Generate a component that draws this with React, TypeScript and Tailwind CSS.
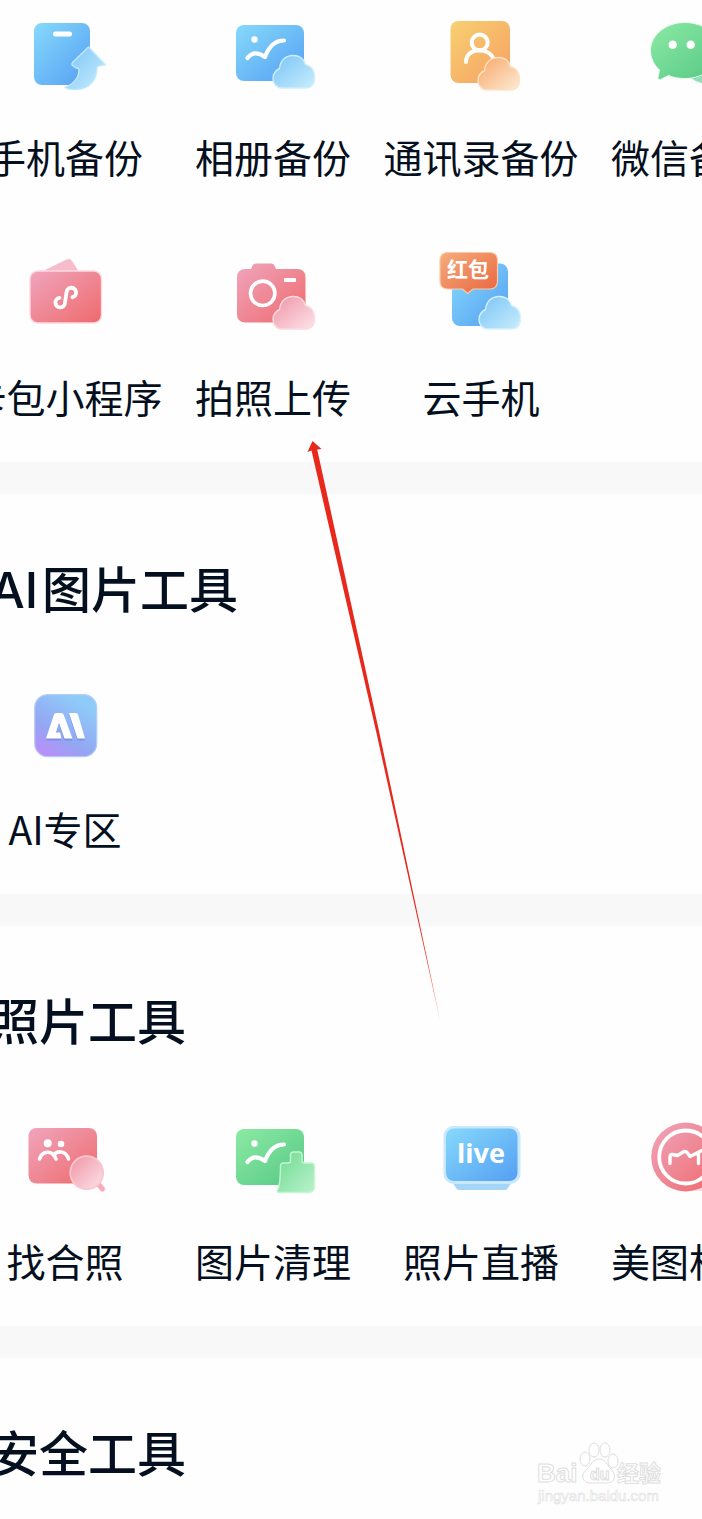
import type { ReactNode } from "react";

type Tool = { name: string; icon: ReactNode };
type Tone = { id: string; from: string; to: string };

const tones: Tone[] = [
  { id: "blue", from: "#86d9fb", to: "#549ff3" },
  { id: "orange", from: "#f7d071", to: "#f7a063" },
  { id: "green", from: "#8ceaa4", to: "#55c885" },
  { id: "pink", from: "#f0a5bd", to: "#ee6a6c" },
  { id: "badge", from: "#f6ad7c", to: "#e96540" },
  { id: "blue-glass", from: "#79c4f6", to: "#c9edfd" },
  { id: "orange-glass", from: "#f8a666", to: "#fdebd6" },
  { id: "green-glass", from: "#6fd991", to: "#b9f3cb" },
  { id: "pink-glass", from: "#f093a4", to: "#fce4ea" },
];

function Gradients() {
  return (
    <svg aria-hidden="true" className="absolute size-0">
      <defs>
        {tones.map((tone) => (
          <linearGradient key={tone.id} id={tone.id} x1="0" y1="0" x2="1" y2="1">
            <stop offset="0" stopColor={tone.from} />
            <stop offset="1" stopColor={tone.to} />
          </linearGradient>
        ))}
        <linearGradient id="ai" x1="0.15" y1="1" x2="0.7" y2="0.1">
          <stop offset="0" stopColor="#bd8cfa" />
          <stop offset="0.4" stopColor="#94a6f3" />
          <stop offset="1" stopColor="#8fcbf9" />
        </linearGradient>
      </defs>
    </svg>
  );
}

function Icon({ children }: { children: ReactNode }) {
  return (
    <svg
      viewBox="0 0 120 90"
      fill="none"
      aria-hidden="true"
      className="h-[90px] w-[120px] shrink-0"
    >
      {children}
    </svg>
  );
}

function Cloud({ fill, edge, at }: { fill: string; edge: string; at?: string }) {
  return (
    <path
      transform={at}
      d="M69 78C63 78 60 73 60 68.500C60 63.500 62.500 60.500 66.500 58.500C67.500 50 73 45.500 80 45.500C86.500 45.500 91 49 92.500 54.500C98.500 56 101.500 61 101.500 67C101.500 74 98 78 92 78Z"
      fill={fill}
      stroke={edge}
      strokeWidth="1.4"
    />
  );
}

function Landscape() {
  return (
    <>
      <circle cx="41.500" cy="29.500" r="3.200" fill="#fff" />
      <path
        d="M34.500 48C38.500 42.500 44 41.500 52 47C56 36 62 30.500 71 30.500"
        stroke="#fff"
        strokeWidth="4.200"
        strokeLinecap="round"
        strokeLinejoin="round"
      />
    </>
  );
}

function PhoneBackupIcon() {
  return (
    <Icon>
      <rect x="29" y="13" width="56" height="62" rx="8" fill="url(#blue)" />
      <rect x="48" y="21.500" width="19" height="5" rx="2.500" fill="#fff" />
      <path
        d="M83.500 37L100.500 55Q96 54.500 92 57C92 69 85 79 72 79.500Q64 80 60 77.500C69 74 74.500 67 74 59Q70 58 67 55Q66.500 53.500 68 52Z"
        fill="url(#blue-glass)"
        stroke="#bfe8fc"
        strokeWidth="1.4"
        strokeLinejoin="round"
      />
    </Icon>
  );
}

function AlbumIcon() {
  return (
    <Icon>
      <rect x="23" y="15" width="68" height="56" rx="8" fill="url(#blue)" />
      <Landscape />
      <Cloud fill="url(#blue-glass)" edge="#cdeefd" />
    </Icon>
  );
}

function ContactsIcon() {
  return (
    <Icon>
      <rect x="29.500" y="11" width="59.500" height="62" rx="8" fill="url(#orange)" />
      <g stroke="#fff" strokeWidth="4" strokeLinecap="round">
        <circle cx="58.700" cy="32.500" r="8" />
        <path d="M45 52C45 36.500 69.500 36.500 73 50.500" />
      </g>
      <Cloud fill="url(#orange-glass)" edge="#fde3c4" at="translate(-3 2)" />
    </Icon>
  );
}

function WechatIcon() {
  return (
    <Icon>
      <ellipse cx="81" cy="55" rx="26" ry="19" fill="#8fdfb4" />
      <path
        d="M56 12.500C75 12.500 91 25 91 40.500C91 56 75 68.500 56 68.500C50 68.500 44 67.500 39.500 65.500L31.500 69.500Q28.500 70.500 29 67.500L30.500 60C25 55 21.500 48 21.500 40.500C21.500 25 37 12.500 56 12.500Z"
        fill="url(#green)"
        stroke="#e6faec"
        strokeWidth="1"
      />
      <circle cx="43.700" cy="34.700" r="4.200" fill="#fff" />
      <circle cx="61.700" cy="34.700" r="4.200" fill="#fff" />
    </Icon>
  );
}

function CardIcon() {
  return (
    <Icon>
      <path d="M36 22L61.500 9.500Q65 8 67 11L74 22Z" fill="#f6bccb" />
      <rect
        x="25"
        y="21"
        width="71.500"
        height="52"
        rx="8"
        fill="url(#pink)"
        stroke="#fbd9e0"
        strokeWidth="1.4"
      />
      <path
        d="M67.500 47.200A4.800 4.800 0 1 0 61.500 42.500L60 52.500A4.800 4.800 0 1 1 54.500 47.800"
        stroke="#fff"
        strokeWidth="3.800"
        strokeLinecap="round"
      />
    </Icon>
  );
}

function CameraIcon() {
  return (
    <Icon>
      <path
        d="M32.500 19H38L39.500 15.500Q40.500 13.500 43 13.500H58Q60.500 13.500 61.500 15.500L63 19H84Q92.500 19 92.500 27.500V64Q92.500 72.500 84 72.500H32.500Q24 72.500 24 64V27.500Q24 19 32.500 19Z"
        fill="url(#pink)"
      />
      <circle cx="49.700" cy="43.300" r="12.200" stroke="#fff" strokeWidth="3.600" />
      <rect x="71" y="28" width="12" height="4" rx="1" fill="#fff" />
      <Cloud fill="url(#pink-glass)" edge="#fbd9e0" at="translate(0 1)" />
    </Icon>
  );
}

function CloudPhoneIcon() {
  return (
    <Icon>
      <rect x="31" y="13.500" width="56" height="62.500" rx="8" fill="url(#blue)" />
      <path
        d="M27 2.500H68.500Q76.500 2.500 76.500 10.500V31Q76.500 39 68.500 39H52L46.700 43.500L41.500 39H27Q19 39 19 31V10.500Q19 2.500 27 2.500Z"
        fill="url(#badge)"
        stroke="#fbc9a8"
        strokeWidth="1.2"
      />
      <text
        x="47"
        y="27"
        textAnchor="middle"
        fill="#fff"
        className="font-['Noto_Sans_CJK_SC',sans-serif] text-[21px] font-bold"
      >
        红包
      </text>
      <Cloud fill="url(#blue-glass)" edge="#d6f1fd" at="translate(-2 1)" />
    </Icon>
  );
}

function AiIcon() {
  return (
    <Icon>
      <rect
        x="29.700"
        y="12.700"
        width="62"
        height="62"
        rx="13"
        fill="url(#ai)"
        stroke="#b3cdf8"
        strokeWidth="1.2"
      />
      <g fill="#5d78cf" opacity="0.45" transform="translate(0 2)">
        <path d="M41 56.500L49 32.500Q49.500 31 51.500 31H56Q58 31 58.600 32.500L67.500 56.500H59.500L54 41L51 50.500H55L56.500 56.500Z" />
        <path d="M64 31H71Q72.300 31 73 32.500L80 56.500H72.500Z" />
      </g>
      <g fill="#fff">
        <path d="M41 56.500L49 32.500Q49.500 31 51.500 31H56Q58 31 58.600 32.500L67.500 56.500H59.500L54 41L51 50.500H55L56.500 56.500Z" />
        <path d="M64 31H71Q72.300 31 73 32.500L80 56.500H72.500Z" />
      </g>
    </Icon>
  );
}

function FindPhotosIcon() {
  return (
    <Icon>
      <rect x="23.500" y="14" width="68.500" height="55.500" rx="8" fill="url(#pink)" />
      <circle cx="42.700" cy="29.300" r="4" fill="#fff" />
      <circle cx="56" cy="30" r="3.300" fill="#fff" />
      <path
        d="M34.500 45C37 36.500 47.500 35.500 51 45M48.500 41C53 35.500 61.500 37.500 63.500 45"
        stroke="#fff"
        strokeWidth="3.600"
        strokeLinecap="round"
      />
      <path d="M94 71L97.500 75" stroke="#f5adba" strokeWidth="5" strokeLinecap="round" />
      <circle
        cx="81.700"
        cy="58.700"
        r="16.500"
        fill="url(#pink-glass)"
        stroke="#fac6d0"
        strokeWidth="1.800"
      />
    </Icon>
  );
}

function CleanIcon() {
  return (
    <Icon>
      <rect x="23" y="15" width="68" height="56" rx="8" fill="url(#green)" />
      <Landscape />
      <path
        d="M65.500 78.500Q63.500 78.500 64.500 76.500Q67.500 70 67.500 52Q67.500 49 70.500 49H75Q77.500 49 77.500 46.500V41Q77.500 38 80.500 38H86Q89 38 89 41V46.500Q89 49 91.500 49H98Q101.500 49 101.500 52.500V72Q101.500 78.500 95 78.500Z"
        fill="url(#green-glass)"
        stroke="#c4f6d2"
        strokeWidth="1.4"
      />
    </Icon>
  );
}

function LiveIcon() {
  return (
    <Icon>
      <path d="M31 68H91L86.500 74.500Q85.500 76 83.500 76H38.500Q36.500 76 35.500 74.500Z" fill="#a5d6f8" />
      <rect x="22.500" y="12" width="77" height="58" rx="10" fill="#c8e8fc" />
      <rect x="25" y="14.500" width="71.500" height="52.500" rx="8" fill="url(#blue)" />
      <text
        x="60"
        y="49"
        textAnchor="middle"
        fill="#fff"
        className="font-['Open_Sans',sans-serif] text-[27px] font-bold"
      >
        live
      </text>
    </Icon>
  );
}

function MeituIcon() {
  return (
    <Icon>
      <path d="M60 72H92V77H66Z" fill="#fbdbe3" />
      <circle cx="56.700" cy="43" r="34.500" fill="url(#pink)" />
      <circle cx="56.700" cy="43" r="26.500" stroke="#fff" strokeWidth="3.800" />
      <path
        d="M41 49.500V42.500Q41 40 43.500 40.500L48.500 41.500L55 37.500Q57 37 58.500 39L61 42.500L78 34M69.500 49.500V40"
        stroke="#fff"
        strokeWidth="3.400"
        strokeLinecap="round"
        strokeLinejoin="round"
      />
    </Icon>
  );
}

const backupTools: Tool[] = [
  { name: "手机备份", icon: <PhoneBackupIcon /> },
  { name: "相册备份", icon: <AlbumIcon /> },
  { name: "通讯录备份", icon: <ContactsIcon /> },
  { name: "微信备份", icon: <WechatIcon /> },
  { name: "卡包小程序", icon: <CardIcon /> },
  { name: "拍照上传", icon: <CameraIcon /> },
  { name: "云手机", icon: <CloudPhoneIcon /> },
];

const aiTools: Tool[] = [{ name: "AI专区", icon: <AiIcon /> }];

const photoTools: Tool[] = [
  { name: "找合照", icon: <FindPhotosIcon /> },
  { name: "图片清理", icon: <CleanIcon /> },
  { name: "照片直播", icon: <LiveIcon /> },
  { name: "美图相机", icon: <MeituIcon /> },
];

// The grid runs past both edges of the screen.
function ToolGrid({ tools }: { tools: Tool[] }) {
  return (
    <div className="-mr-[91px] -ml-[39px] grid grid-cols-4 gap-y-[66px]">
      {tools.map((tool) => (
        <button key={tool.name} type="button" className="flex flex-col items-center gap-7">
          {tool.icon}
          <span className="text-[39px] leading-[56px] whitespace-nowrap">{tool.name}</span>
        </button>
      ))}
    </div>
  );
}

function SectionTitle({ children }: { children: ReactNode }) {
  return (
    <h2 className="-ml-[10px] text-[49px] leading-[64px] font-medium whitespace-nowrap">
      {children}
    </h2>
  );
}

function Divider() {
  return <div className="h-8 bg-[#f8f8f8]" />;
}

function Arrow() {
  return (
    <svg
      viewBox="0 0 134 580"
      aria-hidden="true"
      className="pointer-events-none absolute top-[441px] left-[307px] h-[580px] w-[134px]"
    >
      <path d="M5.500 0L14.500 8L10.200 8.500L72 290L133 579L69 290L4.500 9.500L.5 11Z" fill="#e8281c" />
    </svg>
  );
}

function Watermark() {
  return (
    <svg
      viewBox="0 0 130 64"
      role="img"
      aria-label="Baidu 经验"
      className="pointer-events-none absolute right-9 bottom-[14px] h-16 w-[130px]"
      fill="#fff"
      stroke="#dedede"
      strokeWidth="1"
    >
      <text x="1" y="41" className="font-['Liberation_Sans',sans-serif] text-[26px] font-bold">
        Bai
      </text>
      <ellipse cx="49" cy="18" rx="5" ry="7" />
      <ellipse cx="58" cy="9" rx="5" ry="7" />
      <ellipse cx="69" cy="9" rx="5" ry="7" />
      <ellipse cx="77" cy="20" rx="5" ry="7" />
      <path d="M63 18C69 18 71 24 75 28C81 34 79 42 71 42H55C46 42 44 34 51 28C55 24 57 18 63 18Z" />
      <text x="54" y="39" className="font-['Liberation_Sans',sans-serif] text-[16px] font-bold">
        du
      </text>
      <text x="81" y="40" className="font-['Noto_Sans_CJK_SC',sans-serif] text-[22px] font-bold">
        经验
      </text>
      <text
        x="2"
        y="60"
        strokeWidth="0.6"
        className="font-['Liberation_Sans',sans-serif] text-[15px]"
      >
        jingyan.baidu.com
      </text>
    </svg>
  );
}

export default function App() {
  return (
    <main className="relative min-h-screen overflow-hidden bg-[#fefefe] font-['Noto_Sans_CJK_SC',sans-serif] text-[#040f20]">
      <Gradients />

      <section className="pt-[10px] pb-[38px]">
        <ToolGrid tools={backupTools} />
      </section>
      <Divider />

      <section className="flex flex-col gap-[63px] pt-[61px] pb-[38px]">
        <SectionTitle>
          <span className="mr-1 font-['Inter',sans-serif] leading-none">AI</span>图片工具
        </SectionTitle>
        <ToolGrid tools={aiTools} />
      </section>
      <Divider />

      <section className="flex flex-col gap-[63px] pt-[61px] pb-[38px]">
        <SectionTitle>照片工具</SectionTitle>
        <ToolGrid tools={photoTools} />
      </section>
      <Divider />

      <section className="pt-[61px] pb-9">
        <SectionTitle>安全工具</SectionTitle>
      </section>

      <Arrow />
      <Watermark />
    </main>
  );
}
